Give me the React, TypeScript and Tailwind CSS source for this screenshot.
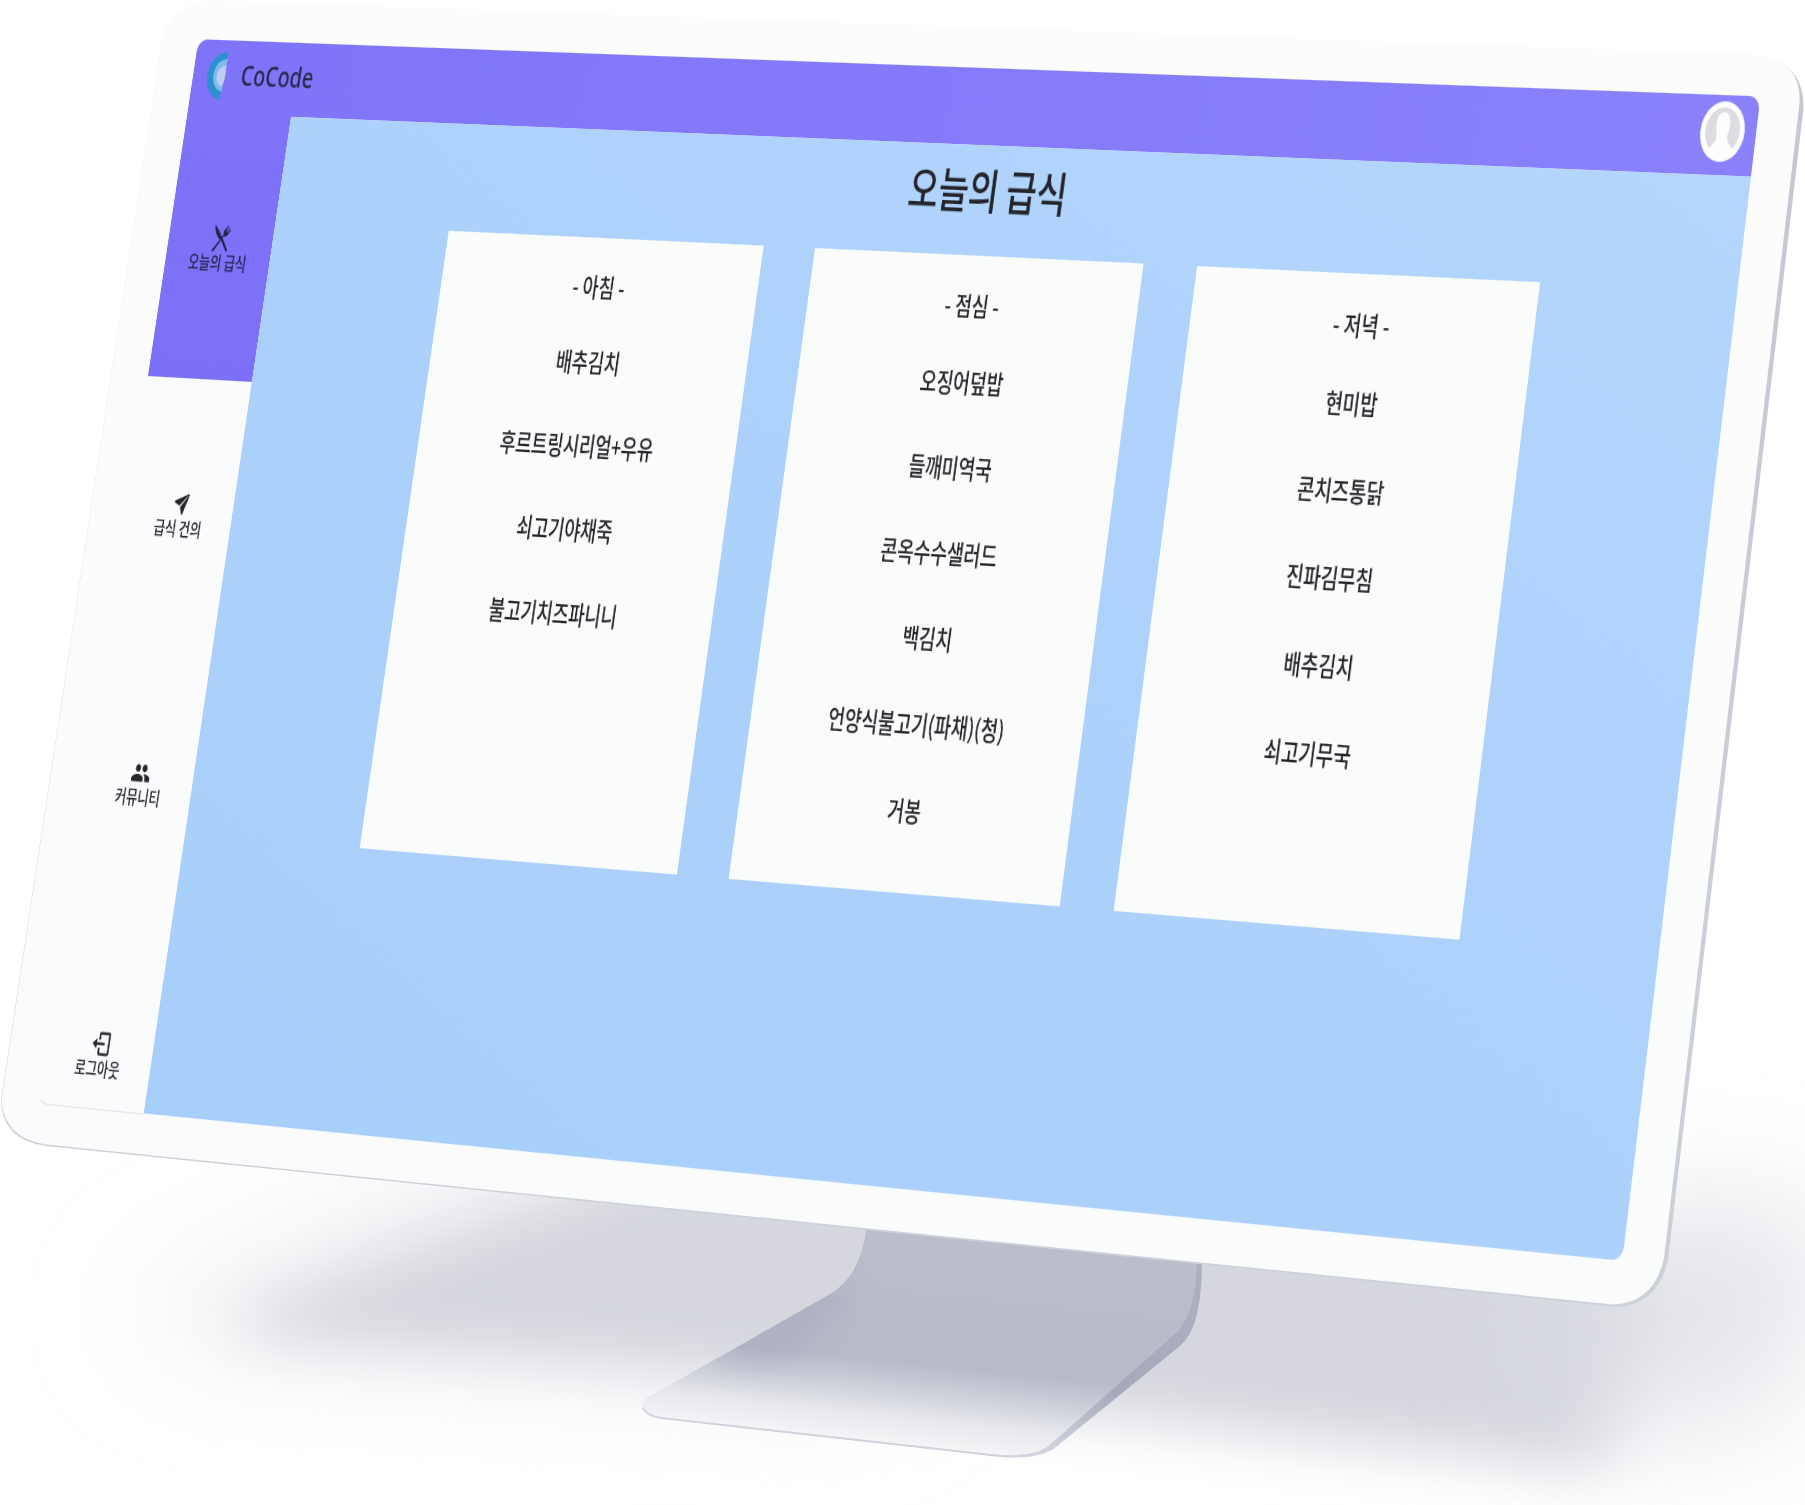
import React from "react";
import { MdPeople } from "react-icons/md";
import { IoPaperPlane } from "react-icons/io5";
import { BiLogOut } from "react-icons/bi";

type Point = [number, number];

const SCREEN_W = 1920;
const SCREEN_H = 937;

/** CSS matrix3d that projects a w×h box onto the quad tl, tr, br, bl. */
function projectTo(w: number, h: number, [tl, tr, br, bl]: Point[]) {
  const dx1 = tr[0] - br[0];
  const dx2 = bl[0] - br[0];
  const sx = tl[0] - tr[0] + br[0] - bl[0];
  const dy1 = tr[1] - br[1];
  const dy2 = bl[1] - br[1];
  const sy = tl[1] - tr[1] + br[1] - bl[1];
  const det = dx1 * dy2 - dx2 * dy1;
  const g = (sx * dy2 - dx2 * sy) / det;
  const k = (dx1 * sy - sx * dy1) / det;
  const a = tr[0] - tl[0] + g * tr[0];
  const b = bl[0] - tl[0] + k * bl[0];
  const d = tr[1] - tl[1] + g * tr[1];
  const e = bl[1] - tl[1] + k * bl[1];
  const m = [a / w, d / w, 0, g / w, b / h, e / h, 0, k / h, 0, 0, 1, 0, tl[0], tl[1], 0, 1];
  return `matrix3d(${m.map((n) => n.toFixed(10)).join(",")})`;
}

// The projected layer carries a 20px transparent margin so that its edges stay smooth.
const screenTransform =
  projectTo(SCREEN_W, SCREEN_H, [
    [198.5, 39.2],
    [1760.5, 96.4],
    [1622.5, 1261],
    [39, 1103],
  ]) + " translate(-20px, -20px)";

function CutleryIcon() {
  return (
    <svg viewBox="0 0 24 24" className="size-[27px]" fill="currentColor">
      <path d="M3.2 1.4c3.2 1.8 6.6 5.300 9.300 9.200l-1.800 2.200C7.300 11 3.200 6.500 3.200 1.400z" />
      <path d="M10.600 11.200l2-1.400 8.200 10.600c.7 1-.7 2.300-1.600 1.400z" />
      <path d="M3.300 20.600l10.900-11.400c-.7-1.800-.1-3.300 1.200-4.700l3.300-3.200.7.6-2.900 3.500.7.600 3.200-3.200.7.600-3 3.400.7.600 3.200-2.900.5.700-3.100 3.500c-1.300 1.400-2.900 2-4.500 1.400L4.900 22c-1 .9-2.500-.4-1.600-1.400z" />
    </svg>
  );
}

function Logo() {
  return (
    <svg viewBox="0 0 30 42" className="h-[42px] w-[30px]">
      <path d="M26 0A22 21 0 0 0 24 42V33A13 13 0 0 1 26 8z" fill="#2b8fd0" />
      <path d="M27 6A15 14.500 0 0 0 25 35z" fill="#7fbbe8" />
      <path d="M26.500 11.500Q15 13 15.500 21Q16 29 24 30.500Q27 26 27 20z" fill="#bfcdf4" />
    </svg>
  );
}

function Avatar() {
  return (
    <svg viewBox="0 0 50 50" className="size-[50px]">
      <circle cx="25" cy="25" r="25" fill="#fdfdfd" />
      <path d="M12 39A19.500 19.500 0 1 1 38 39L32 33Q30 29 32 25Q35 10 25 9Q15 10 18 25Q20 29 18 33z" fill="#dcdde3" />
    </svg>
  );
}

const nav = [
  { label: "오늘의 급식", icon: <CutleryIcon />, active: true },
  { label: "급식 건의", icon: <IoPaperPlane className="size-[21px]" />, active: false },
  { label: "커뮤니티", icon: <MdPeople className="size-[26px]" />, active: false },
  { label: "로그아웃", icon: <BiLogOut className="size-[27px]" />, active: false },
];

const meals = [
  { title: "- 아침 -", items: ["배추김치", "후르트링시리얼+우유", "쇠고기야채죽", "불고기치즈파니니"] },
  {
    title: "- 점심 -",
    items: ["오징어덮밥", "들깨미역국", "콘옥수수샐러드", "백김치", "언양식불고기(파채)(청)", "거봉"],
  },
  { title: "- 저녁 -", items: ["현미밥", "콘치즈통닭", "진파김무침", "배추김치", "쇠고기무국"] },
];

function Dashboard() {
  return (
    <div className="flex h-[937px] w-[1920px] flex-col overflow-hidden rounded-[12px] bg-[#fafbfc] font-['Noto_Sans_CJK_KR',sans-serif] font-medium text-[#25262c]">
      <header className="flex h-[66px] shrink-0 items-start justify-between bg-linear-to-r from-[#7f74f8] to-[#8a81fb] pr-[13px] pl-[16px]">
        <div className="flex h-[64px] items-center gap-[18px]">
          <Logo />
          <span className="pb-[5px] font-['Noto_Sans',sans-serif] text-[26px] leading-none text-[#2b2850]">
            CoCode
          </span>
        </div>
        <div className="pt-[5px]">
          <Avatar />
        </div>
      </header>
      <div className="flex min-h-0 flex-1">
        <nav className="flex w-[138px] shrink-0 flex-col overflow-hidden">
          {nav.map((item) => (
            <div
              key={item.label}
              className={
                item.active
                  ? "flex h-[235px] shrink-0 flex-col items-center justify-center bg-linear-to-b from-[#7f74f8] to-[#7b70f7] pt-[6px] text-[#26234d]"
                  : "flex h-[235px] shrink-0 flex-col items-center justify-center pt-[6px]"
              }
            >
              <div className="flex h-[24px] items-center">{item.icon}</div>
              <span className="mt-[-2px] mb-[2px] text-[16px] leading-[20px] whitespace-nowrap">{item.label}</span>
            </div>
          ))}
        </nav>
        <main className="flex flex-1 flex-col items-center bg-linear-to-tr from-[#a8cffb] via-[#acd1fb] to-[#b4d6fd] pl-[2px]">
          <h1 className="mt-[7px] pl-[4px] text-[40px] leading-[60px]">오늘의 급식</h1>
          <div className="mt-[27px] flex gap-[64px]">
            {meals.map((meal) => (
              <section
                key={meal.title}
                className="flex h-[536px] w-[401px] flex-col items-center bg-[#fafbfb] pl-[3px] text-[22px]"
              >
                <h2 className="mt-[25px] h-[32px] leading-[32px]">{meal.title}</h2>
                <ul className="mt-[33px] flex flex-col items-center gap-[40px]">
                  {meal.items.map((dish) => (
                    <li key={dish} className="h-[32px] leading-[32px] whitespace-nowrap">
                      {dish}
                    </li>
                  ))}
                </ul>
              </section>
            ))}
          </div>
        </main>
      </div>
    </div>
  );
}

function Monitor() {
  return (
    <svg viewBox="0 0 1805 1505" className="block h-[1505px] w-[1805px]">
      <defs>
        <filter id="soft" x="-20%" y="-60%" width="140%" height="220%">
          <feGaussianBlur stdDeviation="34 28" />
        </filter>
        <filter id="softer" x="-60%" y="-60%" width="220%" height="220%">
          <feGaussianBlur stdDeviation="60" />
        </filter>
        <filter id="shadeBlur" x="-40%" y="-40%" width="180%" height="180%">
          <feGaussianBlur stdDeviation="14" />
        </filter>
        <clipPath id="standClip">
          <path d="M867 1225Q863 1264 843 1284Q838 1289 832 1293L649 1397Q641 1403 643 1408Q647 1415.500 662 1417.500L1000 1455Q1038 1457 1052 1443L1177 1332Q1196 1312 1197 1262z" />
        </clipPath>
        <linearGradient id="stand" gradientUnits="userSpaceOnUse" x1="930" y1="1250" x2="909" y2="1450">
          <stop offset="0" stopColor="#bbbdca" />
          <stop offset="0.3" stopColor="#b9bbc9" />
          <stop offset="0.57" stopColor="#b8bac8" />
          <stop offset="0.72" stopColor="#d0d2db" />
          <stop offset="0.84" stopColor="#e7e8ec" />
          <stop offset="1" stopColor="#f7f7f9" />
        </linearGradient>
        <linearGradient id="standEdge" gradientUnits="userSpaceOnUse" x1="1180" y1="1260" x2="1040" y2="1455">
          <stop offset="0" stopColor="#adb0c0" />
          <stop offset="0.6" stopColor="#a6a9ba" />
          <stop offset="1" stopColor="#d6d7e0" />
        </linearGradient>
        <linearGradient id="bezel" x1="0" y1="1" x2="1" y2="0">
          <stop offset="0" stopColor="#f9fafb" />
          <stop offset="0.5" stopColor="#fbfcfc" />
          <stop offset="1" stopColor="#fcfcfc" />
        </linearGradient>
        <linearGradient id="side" gradientUnits="userSpaceOnUse" x1="1800" y1="60" x2="1640" y2="1300">
          <stop offset="0" stopColor="#c4c6d2" />
          <stop offset="1" stopColor="#cfd1da" />
        </linearGradient>
      </defs>

      <path d="M130 1305L520 1150L900 1200L900 1390L160 1340z" fill="#dcdde4" opacity="0.5" filter="url(#softer)" />
      <path d="M235 1316L660 1160L1600 1240L1650 1300L1600 1470L1300 1440L640 1365L260 1338z" fill="#d6d7de" filter="url(#soft)" />
      <path d="M1500 1260L1700 1190L1850 1230L1780 1420L1560 1440z" fill="#dcdde4" opacity="0.75" filter="url(#softer)" />

      <path
        d="M867 1225Q863 1264 843 1284Q838 1289 832 1293L649 1397Q641 1403 643 1409Q647 1417 662 1419L1000 1457Q1042 1460 1057 1446L1180 1346Q1202 1328 1202 1262z"
        fill="url(#standEdge)"
      />
      <path
        d="M867 1225Q863 1264 843 1284Q838 1289 832 1293L649 1397Q641 1403 643 1408Q647 1415.500 662 1417.500L1000 1455Q1038 1457 1052 1443L1177 1332Q1196 1312 1197 1262z"
        fill="url(#stand)"
      />
      <g clipPath="url(#standClip)">
        <path d="M830 1270L700 1356L780 1366L850 1300z" fill="#a9acbf" opacity="0.6" filter="url(#shadeBlur)" />
      </g>
      <path d="M643 1408Q647 1416 662 1418L1000 1456Q1040 1458 1056 1445" fill="none" stroke="#d0d1db" strokeWidth="1.500" />

      <path
        d="M216 2L1758 56Q1804 62 1803.500 108L1668 1260Q1658 1304 1618 1307L46 1146Q2 1140 1 1100L161 48Q168 2 216 2z"
        fill="url(#side)"
      />
      <path
        d="M216 0.500L1756 54.500Q1802 60 1799.500 104L1664 1258Q1654 1303 1613 1304.500L46 1144.500Q4 1138 1.500 1100L161 46Q168 1 216 0.500z"
        fill="url(#bezel)"
      />
      <path d="M41 1099Q42 1103.500 47 1104L143 1114" fill="none" stroke="#e4e5ea" strokeWidth="1.500" />
    </svg>
  );
}

export default function App() {
  return (
    <div className="relative h-[1505px] w-[1805px] overflow-hidden bg-white">
      <Monitor />
      <div className="absolute top-0 left-0 origin-top-left p-[20px]" style={{ transform: screenTransform }}>
        <Dashboard />
      </div>
    </div>
  );
}
